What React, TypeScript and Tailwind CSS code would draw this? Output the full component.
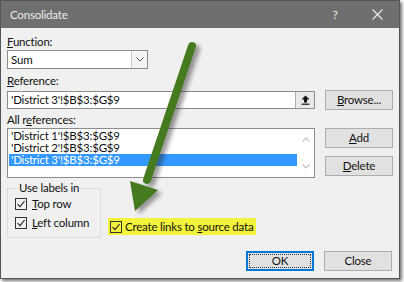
import React from "react";

const font = { fontFamily: 'Lato, "Noto Sans", sans-serif' };

function Check() {
  return (
    <span className="flex h-[12px] w-[12px] shrink-0 items-center justify-center border border-[#333333]">
      <svg width="10" height="10" viewBox="0 0 10 10">
        <path d="M1.5 5.2 L4 7.6 L8.6 2" fill="none" stroke="#222" strokeWidth="1.1" />
      </svg>
    </span>
  );
}

function Btn({ children, className = "" }: { children: React.ReactNode; className?: string }) {
  return (
    <div
      className={
        "flex h-[20px] w-[68px] items-center justify-center border border-[#adadad] bg-[#e1e1e1] text-[#111] " +
        className
      }
    >
      {children}
    </div>
  );
}

export default function App() {
  return (
    <div className="relative h-[282px] w-[404px] bg-white text-[11.5px] tracking-[-0.2px]" style={font}>
      <div className="flex h-[279px] w-[400px] flex-col border border-[#555] bg-[#f0f0f0] shadow-[2px_2px_3px_rgba(0,0,0,0.55)]">
        {/* title bar */}
        <div className="flex h-[27px] shrink-0 items-center bg-[#6f6f6f] pl-[9px] text-[#ececec]">
          <span className="flex-1">Consolidate</span>
          <span className="w-[20px] text-center text-[12px]">?</span>
          <span className="ml-[22px] mr-[12px] flex w-[20px] justify-center">
            <svg width="11" height="11" viewBox="0 0 11 11">
              <path d="M0.5 0.5 L10.5 10.5 M10.5 0.5 L0.5 10.5" stroke="#ececec" strokeWidth="1.1" />
            </svg>
          </span>
        </div>

        <div className="flex flex-col whitespace-nowrap pl-[6px] leading-[14px] text-[#111]">
          <div className="mt-[7px]">
            <span className="underline">F</span>unction:
          </div>
          <div className="mt-[1px] flex h-[19px] w-[141px] items-center border border-[#8c8c8c] bg-white">
            <span className="flex-1 pl-[3px]">Sum</span>
            <span className="flex h-full w-[16px] items-center justify-center border-l border-[#c8c8c8] bg-[#f4f4f4]">
              <svg width="8" height="5" viewBox="0 0 8 5">
                <path d="M0.5 0.5 L4 4 L7.5 0.5" fill="none" stroke="#555" strokeWidth="1" />
              </svg>
            </span>
          </div>

          <div className="mt-[5px]">
            <span className="underline">R</span>eference:
          </div>
          <div className="mt-[2px] flex h-[19px] items-center">
            <div className="flex h-[18px] w-[308px] items-center border border-[#8c8c8c] bg-white">
              <span className="flex-1 pl-[3px]">'District 3'!$B$3:$G$9</span>
              <span className="flex h-full w-[19px] items-center justify-center border-l border-[#adadad] bg-[#e9e9e9]">
                <svg width="9" height="10" viewBox="0 0 9 10">
                  <path d="M4.5 0.5 L8.5 4.5 L6 4.5 L6 7.5 L3 7.5 L3 4.5 L0.5 4.5 Z" fill="#111" />
                  <rect x="0.5" y="8.6" width="8" height="1.2" fill="#111" />
                </svg>
              </span>
            </div>
            <Btn className="ml-[10px]">
              <span>
                <span className="underline">B</span>rowse...
              </span>
            </Btn>
          </div>

          <div className="mt-[4px]">
            All r<span className="underline">e</span>ferences:
          </div>
          <div className="mt-[1px] flex">
            <div className="flex h-[50px] w-[308px] border border-[#8c8c8c] bg-white">
              <div className="flex flex-1 flex-col pl-[1px] pt-[1px]">
                <div className="h-[12px] pl-[2px] leading-[12px]">'District 1'!$B$3:$G$9</div>
                <div className="h-[12px] pl-[2px] leading-[12px]">'District 2'!$B$3:$G$9</div>
                <div className="h-[12px] bg-[#3399ff] pl-[2px] leading-[12px] text-white">'District 3'!$B$3:$G$9</div>
              </div>
              <div className="flex w-[17px] flex-col items-center justify-between py-[8px]">
                <svg width="8" height="5" viewBox="0 0 8 5">
                  <path d="M0.5 4.5 L4 1 L7.5 4.5" fill="none" stroke="#c2c2c2" strokeWidth="1.2" />
                </svg>
                <svg width="8" height="5" viewBox="0 0 8 5">
                  <path d="M0.5 0.5 L4 4 L7.5 0.5" fill="none" stroke="#c2c2c2" strokeWidth="1.2" />
                </svg>
              </div>
            </div>
            <div className="ml-[10px] flex flex-col">
              <Btn>
                <span>
                  <span className="underline">A</span>dd
                </span>
              </Btn>
              <Btn className="mt-[8px]">
                <span>
                  <span className="underline">D</span>elete
                </span>
              </Btn>
            </div>
          </div>

          <div className="mt-[3px] flex items-end">
            <fieldset className="h-[57px] w-[94px] border border-[#dcdcdc] pl-[7px]">
              <legend className="ml-[3px] px-[1px]">Use labels in</legend>
              <div className="mt-[2px] flex items-center gap-[5px]">
                <Check />
                <span>
                  <span className="underline">T</span>op row
                </span>
              </div>
              <div className="mt-[5px] flex items-center gap-[5px]">
                <Check />
                <span>
                  <span className="underline">L</span>eft column
                </span>
              </div>
            </fieldset>
            <div className="mb-[3px] ml-[7px] flex h-[17px] w-[148px] items-center gap-[3px] bg-[#f3f33c] pl-[2px]">
              <Check />
              <span>
                Create links to <span className="underline">s</span>ource data
              </span>
            </div>
          </div>

          <div className="mt-[13px] flex justify-end pr-[7px]">
            <div className="flex h-[20px] w-[68px] items-center justify-center border-2 border-[#0078d7] bg-[#e1e1e1] p-[1px]">
              <div className="flex h-full w-full items-center justify-center border border-dotted border-[#333]">OK</div>
            </div>
            <Btn className="ml-[10px]">Close</Btn>
          </div>
        </div>
      </div>

      {/* annotation arrow */}
      <svg className="pointer-events-none absolute left-0 top-0" width="404" height="282" viewBox="0 0 404 282">
        <defs>
          <filter id="sh" x="-50%" y="-50%" width="200%" height="200%">
            <feGaussianBlur stdDeviation="2" />
          </filter>
        </defs>
        <g transform="translate(4 3)" opacity="0.45" filter="url(#sh)">
          <line x1="192" y1="46" x2="147" y2="180" stroke="#222" strokeWidth="8" strokeLinecap="round" />
          <polygon points="130,181 158,190 135,211" fill="#222" />
        </g>
        <line x1="192" y1="46" x2="147" y2="180" stroke="#467a1f" strokeWidth="8" strokeLinecap="round" />
        <polygon points="130,181 158,190 135,211" fill="#467a1f" />
      </svg>
    </div>
  );
}
